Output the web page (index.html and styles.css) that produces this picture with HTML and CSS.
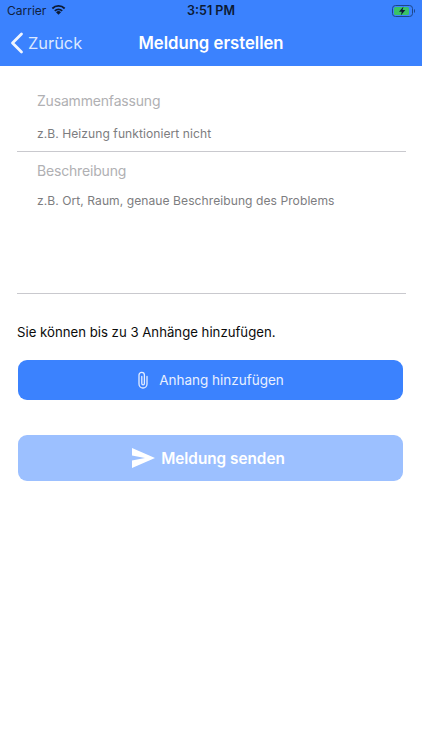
FILE: index.html
```html
<!DOCTYPE html>
<html lang="de">
<head>
<meta charset="utf-8">
<title>Meldung erstellen</title>
<link rel="stylesheet" href="styles.css">
</head>
<body>
<header class="header">
  <div class="status">
    <div class="status-left">
      <span class="carrier">Carrier</span>
      <svg class="wifi" viewBox="0 0 16 12" width="15" height="11"><path d="M8 11.800 5.300 8.900a3.800 3.800 0 0 1 5.400 0Z" fill="#0c1a33"/><path d="M3.300 6.800a6.600 6.600 0 0 1 9.400 0l-1.300 1.300a4.800 4.800 0 0 0-6.800 0Z" fill="#0c1a33"/><path d="M.6 4.200a10.200 10.200 0 0 1 14.800 0l-1.400 1.500a8.200 8.200 0 0 0-12 0Z" fill="#0c1a33"/></svg>
    </div>
    <span class="clock">3:51 PM</span>
    <svg class="battery" viewBox="0 0 23 12" width="23" height="12"><rect x=".5" y=".5" width="20" height="11" rx="3" fill="none" stroke="#1d4688"/><rect x="2" y="2" width="15" height="8" rx="1.500" fill="#39c266"/><path d="M22 4v4c.6-.2 1-1 1-2s-.4-1.800-1-2Z" fill="#1d4688"/><path d="M11.500 1.500 7 6.800h2.800L8.800 10.500l4.500-5.400h-2.800Z" fill="#0c1a33"/></svg>
  </div>
  <nav class="navbar">
    <div class="back">
      <svg class="chevron" viewBox="0 0 14 22" width="14" height="22"><path d="M11.500 2 2.500 11l9 9" fill="none" stroke="#fff" stroke-width="2.800" stroke-linecap="round" stroke-linejoin="round" opacity=".92"/></svg>
      <span>Zurück</span>
    </div>
    <h1 class="title">Meldung erstellen</h1>
  </nav>
</header>
<main class="content">
  <section class="field field-first">
    <div class="label">Zusammenfassung</div>
    <div class="placeholder">z.B. Heizung funktioniert nicht</div>
  </section>
  <section class="field field-second">
    <div class="label">Beschreibung</div>
    <div class="placeholder">z.B. Ort, Raum, genaue Beschreibung des Problems</div>
  </section>
  <p class="hint">Sie können bis zu 3 Anhänge hinzufügen.</p>
  <button class="btn btn-attach" type="button">
    <svg viewBox="0 0 12 18" width="12" height="18"><path d="M10 5.500v7.500a4 4 0 0 1-8 0V4a2.700 2.700 0 0 1 5.400 0v8.500a1.300 1.300 0 0 1-2.600 0V5.500" fill="none" stroke="#e4edff" stroke-width="1.300" stroke-linecap="round"/></svg>
    <span>Anhang hinzufügen</span>
  </button>
  <button class="btn btn-send" type="button">
    <svg viewBox="0 0 23 20" width="23" height="20"><path d="M0 0 23 10 0 20V12.500L13 10 0 7.500Z" fill="#fff"/></svg>
    <span>Meldung senden</span>
  </button>
</main>
</body>
</html>
```
FILE: styles.css
```css
* { box-sizing: border-box; }
html, body { margin: 0; padding: 0; height: 100%; background: #fff; }
body { font-family: Inter, "Liberation Sans", sans-serif; overflow: hidden; }

.header { height: 66px; background: #3b82fe; display: flex; flex-direction: column; }
.status { height: 21px; padding: 0 7px 0 7px; display: flex; align-items: center; justify-content: space-between; position: relative; }
.status-left { display: flex; align-items: center; gap: 5px; }
.carrier { font-size: 12px; color: #10213f; }
.wifi { margin-top: -3px; }
.clock { position: absolute; left: 0; right: 0; text-align: center; font-size: 12.500px; font-weight: 600; color: #0c1a33; }
.battery { position: relative; }

.navbar { flex: 1; display: flex; align-items: center; position: relative; padding: 0 0 2px 10px; }
.back { display: flex; align-items: center; gap: 4px; color: #dce8ff; font-size: 16.400px; }
.title { position: absolute; left: 0; right: 0; margin: 0; text-align: center; font-size: 16.700px; font-weight: 600; color: #fff; }

.content { display: flex; flex-direction: column; padding: 0 16px 0 17px; }
.field { border-bottom: 1px solid #c9c9ce; padding-left: 20px; }
.field-first { height: 86px; padding-top: 26px; }
.field-second { height: 142px; padding-top: 10px; }
.label { font-size: 14px; line-height: 18px; color: #b0b0b3; letter-spacing: -.18px; }
.placeholder { font-size: 12.100px; line-height: 16px; color: #7d7d80; margin-top: 16px; letter-spacing: .05px; }
.field-second .placeholder { margin-top: 13px; }
.hint { margin: 30px 0 0; font-size: 13.200px; line-height: 17px; color: #0b0b0b; }

.btn { border: 0; margin: 0 0 0 1px; padding: 0; display: flex; align-items: center; justify-content: center; color: #fff; font-family: inherit; border-radius: 9px; width: 385px; }
.btn-attach { height: 40px; margin-top: 19px; background: #3b82fe; font-size: 13.500px; gap: 10px; color: #e9f0ff; }
.btn-send { height: 46px; margin-top: 35px; background: #9cc0ff; font-size: 15.300px; font-weight: 600; gap: 6px; padding-right: 4px; }
```
